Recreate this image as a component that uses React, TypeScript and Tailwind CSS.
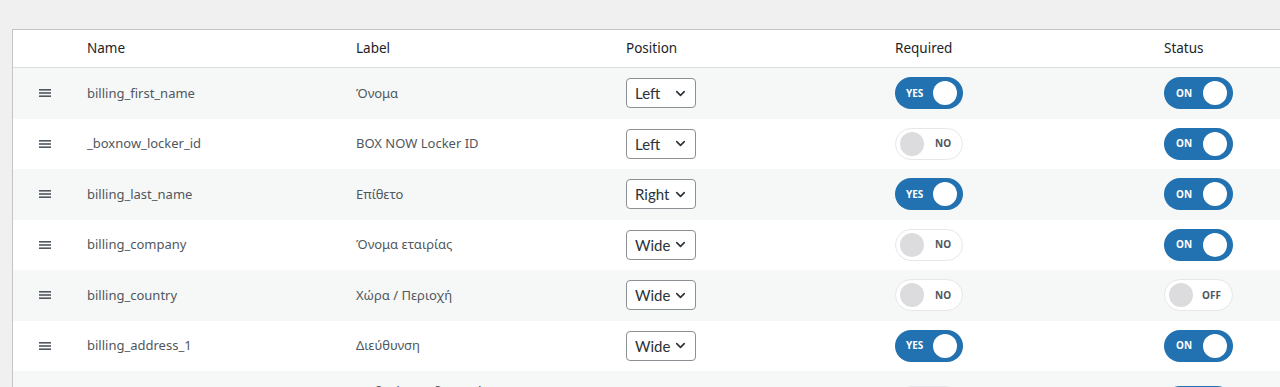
import { ChevronDown } from "lucide-react";

type Field = {
  name: string;
  label: string;
  position: string;
  required: boolean;
  enabled: boolean;
};

const fields: Field[] = [
  { name: "billing_first_name", label: "Όνομα", position: "Left", required: true, enabled: true },
  { name: "_boxnow_locker_id", label: "BOX NOW Locker ID", position: "Left", required: false, enabled: true },
  { name: "billing_last_name", label: "Επίθετο", position: "Right", required: true, enabled: true },
  { name: "billing_company", label: "Όνομα εταιρίας", position: "Wide", required: false, enabled: true },
  { name: "billing_country", label: "Χώρα / Περιοχή", position: "Wide", required: false, enabled: false },
  { name: "billing_address_1", label: "Διεύθυνση", position: "Wide", required: true, enabled: true },
  { name: "billing_address_2", label: "Κωδικός κουδουνιού / πολυκατοικίας (προαιρετικό)", position: "Wide", required: false, enabled: true },
];

const cols = "grid grid-cols-[62px_269px_270px_269px_269px_1fr]";

function Toggle({ on, onText, offText, wide }: { on: boolean; onText: string; offText: string; wide?: boolean }) {
  if (on) {
    return (
      <span
        className={`flex items-center justify-between h-8 rounded-full bg-[#2271b1] pr-[6px] ${wide ? "w-[69px] pl-[12px]" : "w-[68px] pl-[11px]"}`}
      >
        <span className="text-[10px] font-bold text-white">{onText}</span>
        <span className="w-6 h-6 rounded-full bg-white" />
      </span>
    );
  }
  return (
    <span
      className={`flex items-center h-8 rounded-full bg-white border border-[#e6e7e8] pl-[4px] ${wide ? "w-[69px]" : "w-[68px]"}`}
    >
      <span className="w-6 h-6 rounded-full bg-[#dcdcde]" />
      <span className={`text-[10px] font-bold text-[#50575e] ${wide ? "ml-[9px]" : "ml-[11px]"}`}>{offText}</span>
    </span>
  );
}

function Handle() {
  return (
    <svg width="12" height="10" viewBox="0 0 12 10" className="text-[#50575e]">
      <rect x="0" y="1" width="12" height="1.6" fill="currentColor" />
      <rect x="0" y="4.2" width="12" height="1.6" fill="currentColor" />
      <rect x="0" y="7.4" width="12" height="1.6" fill="currentColor" />
    </svg>
  );
}

export default function App() {
  return (
    <div className="h-[387px] overflow-hidden bg-[#f0f0f1] pt-[29px] pl-3 font-['Noto_Sans','Liberation_Sans',sans-serif]">
      <div className="w-[1330px] bg-white border-l border-t border-[#c3c4c7]">
        <div className={`${cols} h-[38px] items-center border-b border-[#dcdcde] text-[13.5px] text-[#1d2327]`}>
          <div />
          <div className="pl-3">Name</div>
          <div className="pl-3">Label</div>
          <div className="pl-3">Position</div>
          <div className="pl-3">Required</div>
          <div className="pl-3">Status</div>
        </div>
        {fields.map((f, i) => (
          <div
            key={f.name}
            className={`${cols} min-h-[50.5px] items-center text-[13px] text-[#50575e] ${i % 2 === 0 ? "bg-[#f6f7f7]" : "bg-white"}`}
          >
            <div className="flex justify-center pl-[1px]">
              <Handle />
            </div>
            <div className="pl-3">{f.name}</div>
            <div className="pl-3 pr-10 py-[10px] leading-[21px]">{f.label}</div>
            <div className="pl-3">
              <div className="flex items-center justify-between w-[70px] h-[30px] rounded-[4px] border border-[#8c8f94] bg-white pl-[8px] pr-[7px] text-[15px] text-[#2c3338] font-['Lato','Noto_Sans',sans-serif]">
                <span>{f.position}</span>
                <ChevronDown size={15} strokeWidth={2.6} className="text-[#2c3338]" />
              </div>
            </div>
            <div className="pl-3">
              <Toggle on={f.required} onText="YES" offText="NO" />
            </div>
            <div className="pl-3">
              <Toggle on={f.enabled} onText="ON" offText="OFF" wide />
            </div>
          </div>
        ))}
      </div>
    </div>
  );
}
